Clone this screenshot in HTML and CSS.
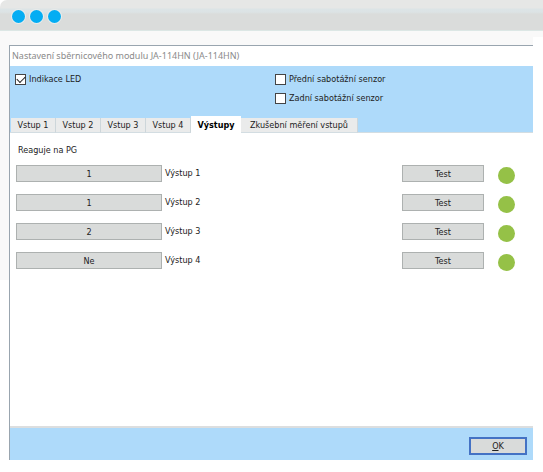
FILE: index.html
```html
<!DOCTYPE html>
<html lang="cs">
  <head>
    <meta charset="utf-8">
    <title>Nastavení sběrnicového modulu</title>
    <link rel="stylesheet" href="styles.css">
  </head>
  <body>
    <div class="topbar">
      <span class="dot"></span>
      <span class="dot"></span>
      <span class="dot"></span>
    </div>

    <div class="desktop">
      <div class="window">
        <h1 class="title">Nastavení sběrnicového modulu JA-114HN (JA-114HN)</h1>

        <div class="header">
          <div class="options">
            <label class="check"><input type="checkbox" checked>Indikace LED</label>
            <div class="option-group">
              <label class="check"><input type="checkbox">Přední sabotážní senzor</label>
              <label class="check"><input type="checkbox">Zadní sabotážní senzor</label>
            </div>
          </div>
          <div class="tabs" role="tablist">
            <button class="tab" role="tab">Vstup 1</button>
            <button class="tab" role="tab">Vstup 2</button>
            <button class="tab" role="tab">Vstup 3</button>
            <button class="tab" role="tab">Vstup 4</button>
            <button class="tab active" role="tab" aria-selected="true">Výstupy</button>
            <button class="tab wide" role="tab">Zkušební měření vstupů</button>
          </div>
        </div>

        <div class="panel">
          <p class="caption">Reaguje na PG</p>
          <div class="row">
            <button class="btn" id="pg1">1</button>
            <label class="name" for="pg1">Výstup 1</label>
            <button class="btn test">Test</button>
            <span class="led"></span>
          </div>
          <div class="row">
            <button class="btn" id="pg2">1</button>
            <label class="name" for="pg2">Výstup 2</label>
            <button class="btn test">Test</button>
            <span class="led"></span>
          </div>
          <div class="row">
            <button class="btn" id="pg3">2</button>
            <label class="name" for="pg3">Výstup 3</label>
            <button class="btn test">Test</button>
            <span class="led"></span>
          </div>
          <div class="row">
            <button class="btn" id="pg4">Ne</button>
            <label class="name" for="pg4">Výstup 4</label>
            <button class="btn test">Test</button>
            <span class="led"></span>
          </div>
        </div>

        <div class="footer">
          <button class="ok"><u>O</u>K</button>
        </div>
      </div>
    </div>
  </body>
</html>
```

FILE: styles.css
```css
* {
  box-sizing: border-box;
}

body {
  margin: 0;
  min-height: 100vh;
  display: flex;
  flex-direction: column;
  background-color: #fff;
  color: #222;
  font-family: "DejaVu Sans Condensed", "DejaVu Sans", sans-serif;
  font-size: 9px;
  line-height: 12px;
}

button {
  font: inherit;
  color: inherit;
  padding: 0;
}

.topbar {
  display: flex;
  align-items: center;
  gap: 5px;
  height: 31px;
  padding: 2px 12px 0;
  border-radius: 7px 0 0 0;
  border-bottom: 1px solid #dce7e5;
  background: linear-gradient(#e6e7e6 8px, #dce4e6 9px, #dce3e5 12px, #dadcdb 14px);
}

.dot {
  width: 13px;
  height: 13px;
  border-radius: 50%;
  background-color: #04adf3;
  box-shadow: 0 0 0 1px #e8ecec;
}

.desktop {
  flex: 1;
  display: flex;
  padding: 14px 10px 12px 9px;
  background:
    linear-gradient(#f9f9f9, #f9f9f9) 0 0 / 9px 249px no-repeat,
    linear-gradient(#f9f9f9, #f9f9f9) 0 0 / calc(100% - 10px) 14px no-repeat,
    linear-gradient(#f9f9f9, #f9f9f9) 0 0 / 100% 6px no-repeat;
}

.window {
  flex: 1;
  display: flex;
  flex-direction: column;
  border-top: 1px solid #99a5af;
  border-left: 1px solid #99a5af;
  background-color: #fff;
}

.title {
  margin: 0;
  padding-left: 2px;
  font-family: "Noto Sans", sans-serif;
  font-size: 9px;
  font-weight: normal;
  line-height: 20px;
  color: #8a8a8a;
}

.header {
  border-bottom: 1px solid #d3dde2;
  background-color: #aedafa;
}

.options {
  display: grid;
  grid-template-columns: 1fr 1fr;
  padding: 7px 0 12px 5px;
}

.option-group {
  display: grid;
  gap: 7px;
  padding-left: 1px;
}

.check {
  display: flex;
  align-items: center;
  align-self: start;
  gap: 3px;
}

.check input {
  appearance: none;
  width: 11px;
  height: 11px;
  margin: 0;
  border: 1px solid #444;
  background-color: #fff;
}

.check input:checked::before {
  content: "";
  display: block;
  width: 7px;
  height: 4px;
  margin: 2px 1px;
  border-left: 1px solid #222;
  border-bottom: 1px solid #222;
  transform: translateY(-1px) rotate(-45deg);
}

.tabs {
  display: flex;
  align-items: flex-end;
  padding-left: 1px;
  margin-bottom: -1px;
}

.tab {
  width: 45px;
  height: 15px;
  border: 0;
  border-right: 1px solid #cdd6da;
  border-bottom: 1px solid #d3dde2;
  background-color: #eaebeb;
}

.tab.active {
  width: 50px;
  height: 17px;
  border: 0;
  background-color: #fff;
  color: #000;
  font-weight: bold;
}

.tab.wide {
  width: 117px;
}

.panel {
  flex: 1;
  padding: 11px 18px 12px 6px;
}

.caption {
  margin: 0 0 9px;
  padding-left: 2px;
}

.row {
  display: flex;
  align-items: center;
  gap: 3px;
  margin-bottom: 12px;
}

.btn {
  width: 146px;
  height: 17px;
  border: 1px solid #adb1b0;
  background-color: #d9dbda;
}

.name {
  flex: 1;
  padding-bottom: 2px;
}

.btn.test {
  width: 82px;
  margin-right: 11px;
}

.led {
  width: 17px;
  height: 17px;
  margin-top: 2px;
  margin-bottom: -2px;
  border-radius: 50%;
  background-color: #95c147;
}

.footer {
  display: flex;
  justify-content: flex-end;
  padding: 9px 6px 5px;
  border-top: 2px solid #dcdedf;
  background-color: #aedafa;
}

.ok {
  width: 58px;
  height: 18px;
  border: 2px solid #4472c4;
  background-color: #d9dbda;
}
```
